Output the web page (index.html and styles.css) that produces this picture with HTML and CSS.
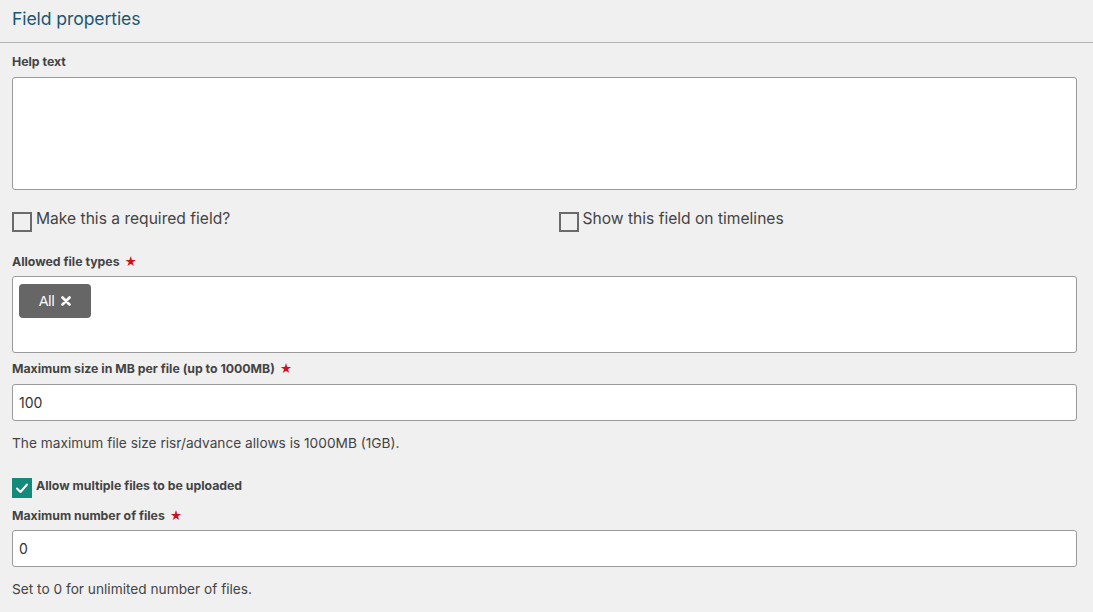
FILE: index.html
```html
<!DOCTYPE html>
<html>
<head>
<meta charset="utf-8">
<link rel="stylesheet" href="styles.css">
</head>
<body>
<div class="panel">
  <header class="head"><h1 class="title">Field properties</h1></header>
  <main class="body">
    <label class="lbl">Help text</label>
    <div class="textarea"></div>

    <div class="checks">
      <div class="check"><span class="box"></span><span class="check-text">Make this a required field?</span></div>
      <div class="check"><span class="box"></span><span class="check-text">Show this field on timelines</span></div>
    </div>

    <label class="lbl lbl-types">Allowed file types <span class="star">★</span></label>
    <div class="tagbox">
      <span class="chip">All <svg class="x" viewBox="0 0 10 10" width="10" height="10"><path d="M1.5 1.5 L8.5 8.5 M8.5 1.5 L1.5 8.5" stroke="#fff" stroke-width="2.6" stroke-linecap="round"/></svg></span>
    </div>

    <label class="lbl lbl-size">Maximum size in MB per file (up to 1000MB) <span class="star">★</span></label>
    <div class="input">100</div>
    <p class="help">The maximum file size risr/advance allows is 1000MB (1GB).</p>

    <div class="check check-on"><span class="box box-on"><svg viewBox="0 0 20 20" width="20" height="20"><path d="M5 10.5 L8.5 14 L15 6.5" fill="none" stroke="#fff" stroke-width="2" stroke-linecap="round" stroke-linejoin="round"/></svg></span><span class="check-text bold">Allow multiple files to be uploaded</span></div>

    <label class="lbl lbl-count">Maximum number of files <span class="star">★</span></label>
    <div class="input">0</div>
    <p class="help">Set to 0 for unlimited number of files.</p>
  </main>
</div>
</body>
</html>
```

FILE: styles.css
```css
* { box-sizing: border-box; }
html, body { margin: 0; padding: 0; }
body {
  background: #f0f0f0;
  font-family: "Inter", "Liberation Sans", sans-serif;
  color: #444;
  width: 1093px;
  height: 612px;
  overflow: hidden;
}
.head {
  height: 43px;
  border-bottom: 1px solid #b5b5b5;
  padding: 0 12px;
  display: flex;
  align-items: center;
}
.title {
  margin: 0;
  font-size: 17.6px;
  font-weight: 400;
  color: #1d5670;
  letter-spacing: -0.1px;
  position: relative;
  top: -3px;
}
.body {
  padding: 11px 16px 0 12px;
  display: flex;
  flex-direction: column;
}
.lbl {
  display: block;
  font-size: 12.3px;
  font-weight: 700;
  color: #444;
  line-height: 16px;
  margin-bottom: 7px;
}
.lbl-types { margin-bottom: 6px; }
.lbl-count { margin-bottom: 6px; }
.star { color: #d0101b; font-size: 12px; margin-left: 2px; }
.textarea {
  height: 113px;
  background: #fff;
  border: 1px solid #9a9a9a;
  border-radius: 3px;
}
.checks {
  display: grid;
  grid-template-columns: 1fr 1fr;
  column-gap: 28px;
  margin-top: 19px;
  margin-bottom: 22px;
}
.check {
  display: flex;
  align-items: flex-start;
  gap: 4px;
}
.box {
  width: 20px;
  height: 20px;
  border: 2px solid #6b6b6b;
  background: transparent;
  flex: none;
  margin-top: 3px;
}
.check-text {
  font-size: 15.6px;
  line-height: 20px;
  color: #444;
}
.tagbox {
  height: 77px;
  background: #fff;
  border: 1px solid #9a9a9a;
  border-radius: 3px;
  padding: 7px 6px;
}
.chip {
  display: inline-flex;
  align-items: center;
  gap: 6px;
  height: 34px;
  width: 72px;
  padding-left: 20px;
  background: #666;
  color: #fff;
  border-radius: 4px;
  font-family: "Liberation Sans", Arial, sans-serif;
  font-size: 14px;
}
.x { display: block; }
.tagbox + .lbl { margin-top: 8px; }
.input {
  height: 37px;
  background: #fff;
  border: 1px solid #9a9a9a;
  border-radius: 3px;
  padding: 0 6px;
  display: flex;
  align-items: center;
  font-size: 14px;
  color: #333;
}
.help {
  margin: 13px 0 0 0;
  font-size: 13.7px;
  line-height: 18px;
  color: #444;
}
.check-on { margin-top: 26px; margin-bottom: 10px; }
.box-on {
  background: #148a7a;
  border: none;
  margin-top: 0;
}
.box-on svg { display: block; }
.bold { font-size: 12.3px; font-weight: 700; line-height: 16px; }
```
